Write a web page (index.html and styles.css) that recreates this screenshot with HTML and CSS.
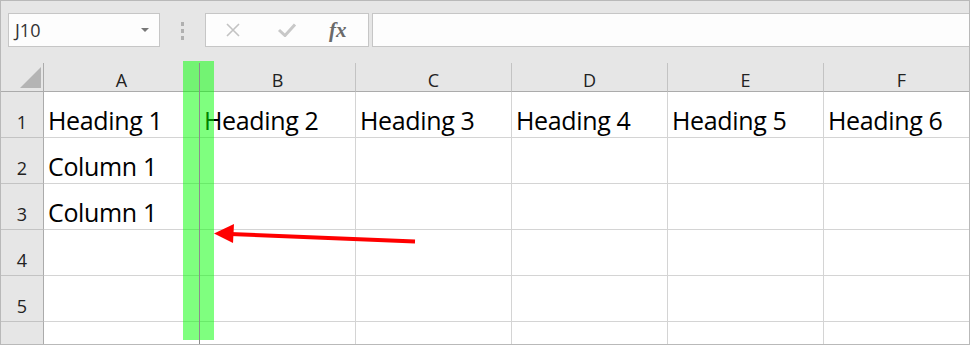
FILE: index.html
```html
<!DOCTYPE html>
<html lang="en">
<head>
    <meta charset="UTF-8">
    <meta name="viewport" content="width=device-width, initial-scale=1.0">
    <title>Sheet</title>
    <link rel="stylesheet" href="styles.css">
</head>
<body>
    <div class="app">
        <div class="toolbar">
            <div class="name-box">
                <span>J10</span>
                <span class="caret"></span>
            </div>
            <div class="dots"><i></i><i></i><i></i></div>
            <div class="fx-buttons">
                <svg class="btn-icon" width="20" height="14" viewBox="0 0 20 14">
                    <path d="M4 1 L16 13 M16 1 L4 13" stroke="#c3c3c3" stroke-width="1.6" fill="none"/>
                </svg>
                <svg class="btn-icon" width="20" height="14" viewBox="0 0 20 14">
                    <path d="M2 7 L8 12.5 L18 1.5" stroke="#c8c8c8" stroke-width="3" fill="none"/>
                </svg>
                <span class="fx">fx</span>
            </div>
            <div class="formula"></div>
        </div>

        <div class="sheet">
            <div class="corner"><span class="tri"></span></div>
            <div class="col-head">A</div>
            <div class="col-head">B</div>
            <div class="col-head">C</div>
            <div class="col-head">D</div>
            <div class="col-head">E</div>
            <div class="col-head">F</div>

            <div class="row-head">1</div>
            <div class="cell">Heading 1</div>
            <div class="cell">Heading 2</div>
            <div class="cell">Heading 3</div>
            <div class="cell">Heading 4</div>
            <div class="cell">Heading 5</div>
            <div class="cell">Heading 6</div>

            <div class="row-head">2</div>
            <div class="cell">Column 1</div>
            <div class="cell"></div>
            <div class="cell"></div>
            <div class="cell"></div>
            <div class="cell"></div>
            <div class="cell"></div>

            <div class="row-head">3</div>
            <div class="cell">Column 1</div>
            <div class="cell"></div>
            <div class="cell"></div>
            <div class="cell"></div>
            <div class="cell"></div>
            <div class="cell"></div>

            <div class="row-head">4</div>
            <div class="cell"></div>
            <div class="cell"></div>
            <div class="cell"></div>
            <div class="cell"></div>
            <div class="cell"></div>
            <div class="cell"></div>

            <div class="row-head">5</div>
            <div class="cell"></div>
            <div class="cell"></div>
            <div class="cell"></div>
            <div class="cell"></div>
            <div class="cell"></div>
            <div class="cell"></div>

            <div class="row-head"></div>
            <div class="cell"></div>
            <div class="cell"></div>
            <div class="cell"></div>
            <div class="cell"></div>
            <div class="cell"></div>
            <div class="cell"></div>
        </div>

        <!-- annotation: highlighted column edge and arrow -->
        <div class="band"></div>
        <div class="band-line"></div>
        <svg class="arrow" width="970" height="345" viewBox="0 0 970 345">
            <line x1="415" y1="241.5" x2="230" y2="234" stroke="#ff0000" stroke-width="4"/>
            <polygon points="214,233.5 234,224 233,243" fill="#ff0000"/>
        </svg>
    </div>
</body>
</html>
```

FILE: styles.css
```css
body {
    margin: 0;
    font-family: 'Open Sans', sans-serif;
}
.app {
    position: relative;
    width: 970px;
    height: 345px;
    box-sizing: border-box;
    border: 1px solid #b9b9b9;
    background: #e6e6e6;
    overflow: hidden;
}
.toolbar {
    height: 62px;
    box-sizing: border-box;
    padding: 12px 0 0 7px;
    display: flex;
    align-items: flex-start;
}
.name-box {
    width: 152px;
    height: 34px;
    box-sizing: border-box;
    border: 1px solid #c6c6c6;
    background: #fdfdfd;
    display: flex;
    align-items: center;
    justify-content: space-between;
    padding: 0 10px 0 6px;
    font-size: 18px;
    color: #333;
}
.caret {
    width: 0;
    height: 0;
    border-left: 4px solid transparent;
    border-right: 4px solid transparent;
    border-top: 4px solid #777;
}
.dots {
    width: 45px;
    display: flex;
    flex-direction: column;
    align-items: center;
    gap: 3px;
    padding-top: 9px;
}
.dots i {
    width: 3px;
    height: 4px;
    background: #b0b0b0;
}
.fx-buttons {
    width: 164px;
    height: 34px;
    box-sizing: border-box;
    border: 1px solid #c6c6c6;
    background: #fdfdfd;
    display: flex;
    align-items: center;
    padding-left: 17px;
    gap: 34px;
}
.fx {
    font-family: 'Liberation Serif', serif;
    font-style: italic;
    font-weight: bold;
    font-size: 21px;
    color: #6a6a6a;
    margin-left: -2px;
}
.formula {
    flex: 1;
    height: 34px;
    box-sizing: border-box;
    margin-left: 3px;
    border: 1px solid #c6c6c6;
    border-right: none;
    background: #fdfdfd;
}
.sheet {
    display: grid;
    grid-template-columns: 43px repeat(6, 156px);
    grid-template-rows: 29px repeat(5, 46px) 30px;
}
.corner {
    border-right: 1px solid #ababab;
    border-bottom: 1px solid #ababab;
    position: relative;
}
.tri {
    position: absolute;
    right: 2px;
    bottom: 3px;
    width: 0;
    height: 0;
    border-left: 21px solid transparent;
    border-bottom: 21px solid #b4b4b4;
}
.col-head {
    border-right: 1px solid #c3c3c3;
    border-bottom: 1px solid #ababab;
    display: flex;
    justify-content: center;
    align-items: flex-end;
    font-size: 18px;
    line-height: 20px;
    padding-bottom: 1px;
    color: #222;
}
.row-head {
    border-right: 1px solid #ababab;
    border-bottom: 1px solid #c3c3c3;
    display: flex;
    justify-content: center;
    align-items: flex-end;
    font-size: 18px;
    line-height: 20px;
    padding-bottom: 5px;
    color: #222;
}
.cell {
    background: #fff;
    border-right: 1px solid #d4d4d4;
    border-bottom: 1px solid #d4d4d4;
    display: flex;
    align-items: flex-end;
    padding: 0 0 2px 4px;
    font-size: 25px;
    letter-spacing: -0.35px;
    line-height: 30px;
    color: #000;
    white-space: nowrap;
}
.band {
    position: absolute;
    left: 182px;
    top: 60px;
    width: 31px;
    height: 279px;
    background: rgba(0, 255, 0, 0.5);
}
.band-line {
    position: absolute;
    left: 198px;
    top: 62px;
    width: 1px;
    height: 282px;
    background: #8c8c8c;
}
.arrow {
    position: absolute;
    left: -1px;
    top: -1px;
}
```
